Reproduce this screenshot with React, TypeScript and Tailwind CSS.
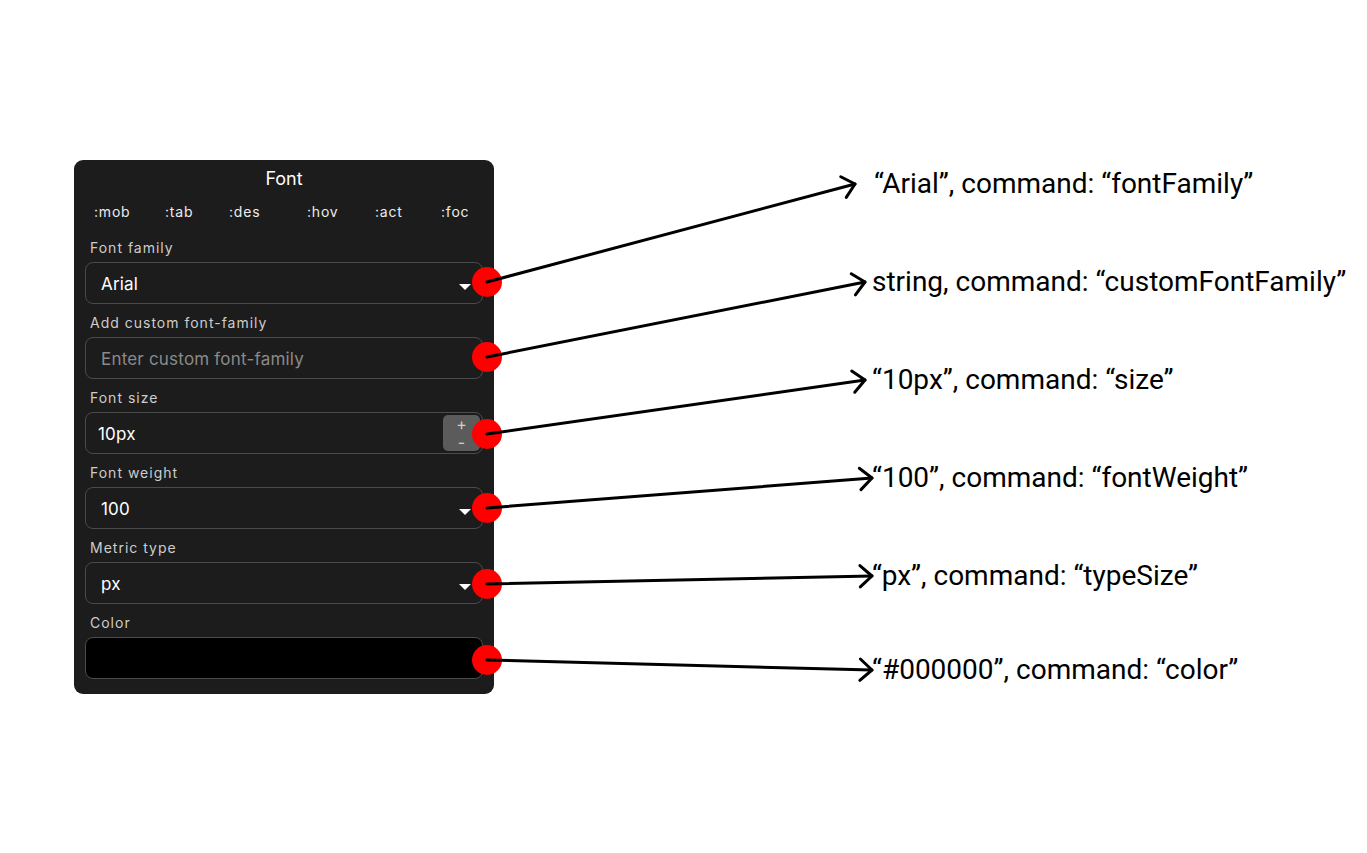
import React from "react";

type Arrow = { y1: number; x2: number; y2: number };

const DOT_X = 487;

const arrows: Arrow[] = [
  { y1: 282, x2: 855, y2: 184 },
  { y1: 357, x2: 865, y2: 282 },
  { y1: 434, x2: 865, y2: 380 },
  { y1: 508, x2: 872, y2: 478 },
  { y1: 584, x2: 872, y2: 576 },
  { y1: 660, x2: 872, y2: 670 },
];

const notes = [
  { top: 170, left: 874, text: "“Arial”, command: “fontFamily”" },
  { top: 268, left: 872, text: "string, command: “customFontFamily”" },
  { top: 366, left: 872, text: "“10px”, command: “size”" },
  { top: 464, left: 872, text: "“100”, command: “fontWeight”" },
  { top: 562, left: 872, text: "“px”, command: “typeSize”" },
  { top: 656, left: 872, text: "“#000000”, command: “color”" },
];

function head(a: Arrow) {
  const dx = DOT_X - a.x2;
  const dy = a.y1 - a.y2;
  const len = Math.hypot(dx, dy);
  const ux = dx / len;
  const uy = dy / len;
  const L = 16;
  const ang = (42 * Math.PI) / 180;
  const rot = (s: number) => [
    a.x2 + L * (ux * Math.cos(s * ang) - uy * Math.sin(s * ang)),
    a.y2 + L * (ux * Math.sin(s * ang) + uy * Math.cos(s * ang)),
  ];
  const p = rot(1);
  const q = rot(-1);
  return `${p[0]},${p[1]} ${a.x2},${a.y2} ${q[0]},${q[1]}`;
}

function Caret() {
  return (
    <span className="ml-auto mt-[8px] h-0 w-0 border-l-[6px] border-r-[6px] border-t-[6px] border-l-transparent border-r-transparent border-t-white" />
  );
}

function Field({ label, children }: { label: string; children: React.ReactNode }) {
  return (
    <div className="flex flex-col">
      <div className="mb-[4px] mt-[1px] h-5 pl-[5px] text-[14px] leading-5 tracking-[1px] text-[#cdcdcd]">
        {label}
      </div>
      {children}
    </div>
  );
}

const box =
  "flex h-[42px] items-center rounded-[8px] border border-[#4b4b4b] text-[17px] tracking-[0.2px]";

export default function App() {
  const tabs = [
    { t: ":mob", w: "w-[71px]" },
    { t: ":tab", w: "w-[64px]" },
    { t: ":des", w: "w-[78px]" },
    { t: ":hov", w: "w-[68px]" },
    { t: ":act", w: "w-[66px]" },
    { t: ":foc", w: "" },
  ];

  return (
    <div className="relative h-[853px] w-full overflow-hidden bg-white">
      <div className="pl-[74px] pt-[160px]">
        <div className="w-[420px] rounded-[9px] bg-[#1c1c1c] px-[11px] pb-[15px] pt-[5px] font-['Inter',sans-serif]">
          <div className="h-7 text-center text-[18px] leading-7 text-white">Font</div>
          <div className="mt-[9px] flex h-5 pl-[9px] text-[14px] leading-5 tracking-[0.8px] text-[#ececec]">
            {tabs.map((x) => (
              <span key={x.t} className={x.w}>
                {x.t}
              </span>
            ))}
          </div>
          <div className="mt-[15px] flex flex-col gap-2">
            <Field label="Font family">
              <div className={`${box} pl-[15px] pr-[11px] text-white`}>
                <span className="mt-[3px]">Arial</span>
                <Caret />
              </div>
            </Field>
            <Field label="Add custom font-family">
              <div className={`${box} px-[15px] text-[#8a8a8a]`}>
                <span className="mt-[3px]">Enter custom font-family</span>
              </div>
            </Field>
            <Field label="Font size">
              <div className={`${box} pl-[12px] pr-[2px] text-white`}>
                <span className="mt-[3px]">10px</span>
                <div className="ml-auto flex h-[36px] w-[37px] flex-col items-center justify-center rounded-[5px] bg-[#5b5b5b] text-[16px] leading-[18px] tracking-normal text-[#cfcfcf]">
                  <span>+</span>
                  <span>-</span>
                </div>
              </div>
            </Field>
            <Field label="Font weight">
              <div className={`${box} pl-[15px] pr-[11px] text-white`}>
                <span className="mt-[3px]">100</span>
                <Caret />
              </div>
            </Field>
            <Field label="Metric type">
              <div className={`${box} pl-[15px] pr-[11px] text-white`}>
                <span className="mt-[3px]">px</span>
                <Caret />
              </div>
            </Field>
            <Field label="Color">
              <div className={`${box} bg-black`} />
            </Field>
          </div>
        </div>
      </div>

      <svg className="pointer-events-none absolute left-0 top-0" width={1367} height={853}>
        {arrows.map((a, i) => (
          <circle key={`c${i}`} cx={DOT_X} cy={a.y1} r={15} fill="#ff0000" />
        ))}
        {arrows.map((a, i) => (
          <g key={`l${i}`} stroke="#000" strokeWidth={3} fill="none" strokeLinecap="round" strokeLinejoin="round">
            <line x1={DOT_X} y1={a.y1} x2={a.x2} y2={a.y2} />
            <polyline points={head(a)} />
          </g>
        ))}
      </svg>

      {notes.map((n) => (
        <div
          key={n.text}
          className="absolute whitespace-nowrap font-['Roboto',sans-serif] text-[28px] leading-[28px] text-black"
          style={{ top: n.top, left: n.left }}
        >
          {n.text}
        </div>
      ))}
    </div>
  );
}
